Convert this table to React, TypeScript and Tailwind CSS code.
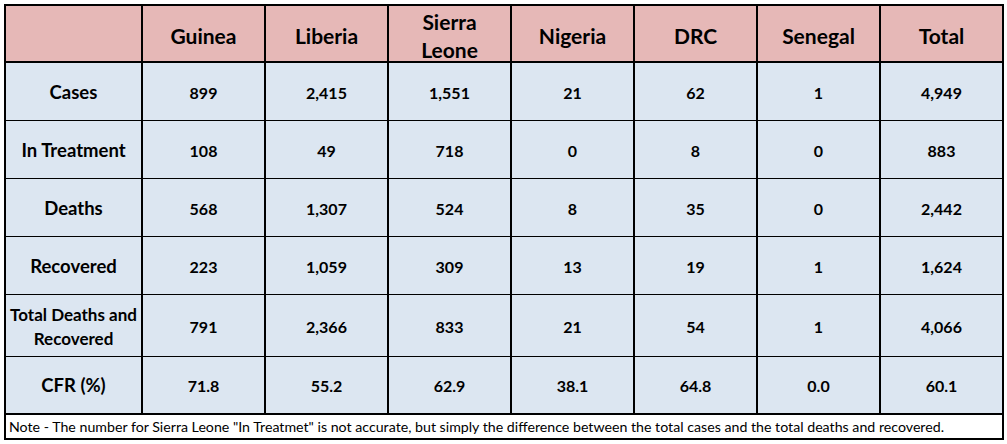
import React from 'react';

const countries = ['Guinea', 'Liberia', 'Sierra Leone', 'Nigeria', 'DRC', 'Senegal', 'Total'];

const rows = [
  { label: 'Cases', values: ['899', '2,415', '1,551', '21', '62', '1', '4,949'], h: 'h-[58px]' },
  { label: 'In Treatment', values: ['108', '49', '718', '0', '8', '0', '883'], h: 'h-[58px]' },
  { label: 'Deaths', values: ['568', '1,307', '524', '8', '35', '0', '2,442'], h: 'h-[58px]' },
  { label: 'Recovered', values: ['223', '1,059', '309', '13', '19', '1', '1,624'], h: 'h-[58px]' },
  { label: 'Total Deaths and Recovered', values: ['791', '2,366', '833', '21', '54', '1', '4,066'], h: 'h-[62px]', small: true },
  { label: 'CFR (%)', values: ['71.8', '55.2', '62.9', '38.1', '64.8', '0.0', '60.1'], h: 'h-[56px]', last: true },
];

const cellW = (i: number) => (i === 6 ? 'w-[121px]' : 'w-[123px] border-r-2 border-black');

export default function App() {
  return (
    <div className="w-[1007px] h-[444px] bg-white pt-[4px] pl-[4px] font-['Lato','Liberation_Sans',sans-serif] text-black">
      <div className="w-[1000px] border-2 border-black">
        <div className="flex h-[57px] border-b-2 border-black bg-[#e6b8b7] font-bold text-[21px] leading-[28px]">
          <div className="w-[137px] border-r-2 border-black" />
          {countries.map((c, i) => (
            <div key={c} className={`${cellW(i)} flex items-center justify-center text-center pt-[4px] px-[20px]`}>
              {c}
            </div>
          ))}
        </div>

        {rows.map((r) => (
          <div key={r.label} className={`flex ${r.h} ${r.last ? '' : 'border-b border-black'} bg-[#dce6f1] font-bold`}>
            <div
              className={`w-[137px] border-r-2 border-black flex items-center justify-center text-center pt-[2px] ${
                r.small ? 'text-[17px] leading-[24px]' : 'text-[18.5px]'
              }`}
            >
              {r.label}
            </div>
            {r.values.map((v, i) => (
              <div key={i} className={`${cellW(i)} flex items-center justify-center text-[16px] pt-[2px]`}>
                {v}
              </div>
            ))}
          </div>
        ))}

        <div className="h-[25px] border-t-2 border-black flex items-center pl-[3px] text-[14.2px] whitespace-nowrap">
          Note - The number for Sierra Leone "In Treatmet" is not accurate, but simply the difference between the total
          cases and the total deaths and recovered.
        </div>
      </div>
    </div>
  );
}
